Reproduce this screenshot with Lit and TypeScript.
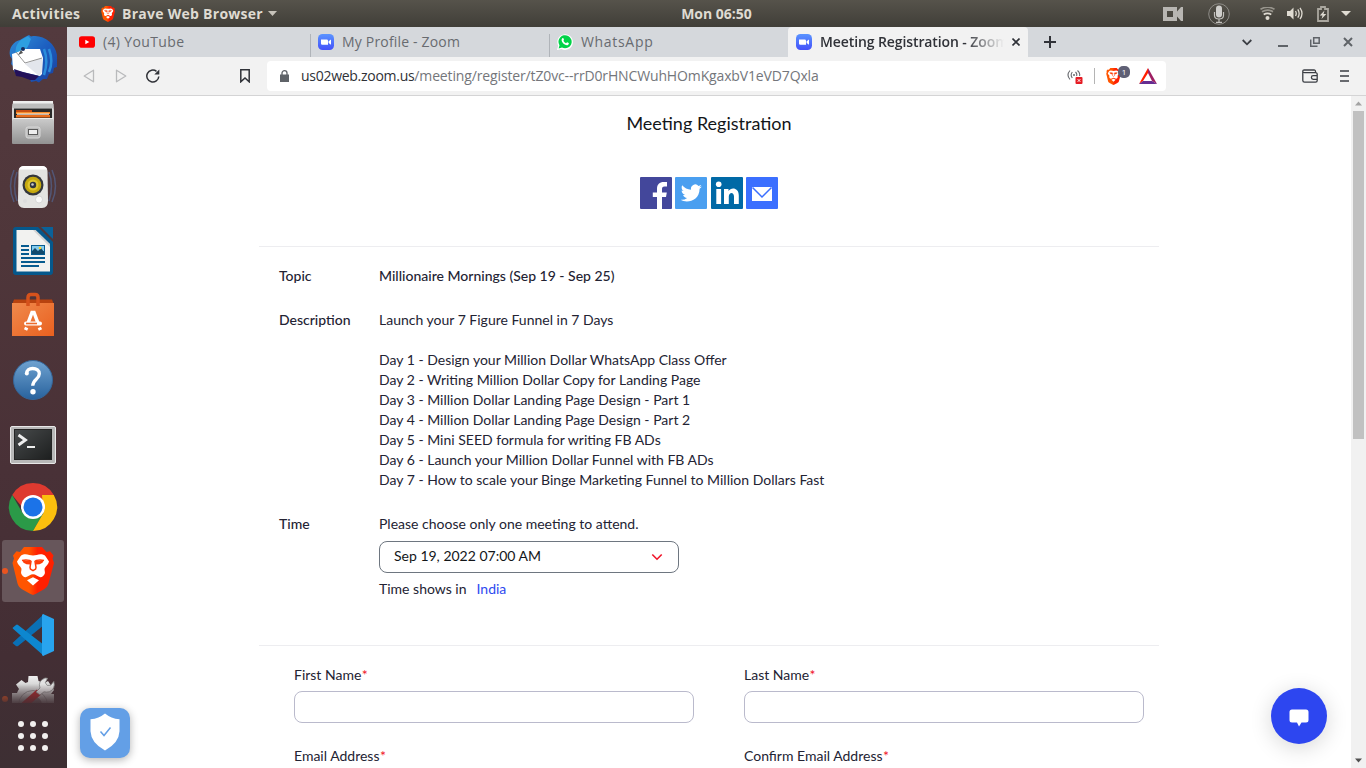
import { LitElement, html, css, svg, nothing, type TemplateResult } from "lit";
import { customElement } from "lit/decorators.js";
import { classMap } from "lit/directives/class-map.js";

const lion = (id: string) => svg`
  <defs><linearGradient id=${id} x1="0" x2="1"><stop offset=".4" stop-color="#ff5500"/><stop offset=".6" stop-color="#ff2000"/></linearGradient></defs>
  <path fill="url(#${id})" d="M15 0h18l4.500 5 3.500-.8 3.500 4.300-1 3 1.500 4.500-5.500 20.500c-.8 2.800-2 4-4.500 5.800L27 46.800 24 48l-3-1.200-8-4.500c-2.500-1.800-3.700-3-4.500-5.800L3.500 16 5 11.500l-1-3L7.500 4.200l3.500.8z"/>
  <path fill="#fff" d="M24 8.500c-2.500 0-5-1.300-7.500-1.300-2 0-4 .6-5 2L8 14.500c.3 2.500 3 4.500 4.300 6.700.6 1.300-.5 3.500-.2 5 .6 2 2.500 4 4.500 4 2.500-.8 5-3 7.400-3s4.900 2.200 7.400 3c2 0 3.900-2 4.500-4 .3-1.500-.8-3.700-.2-5 1.300-2.200 4-4.200 4.300-6.700l-3.500-5.300c-1-1.400-3-2-5-2-2.500 0-5 1.300-7.500 1.300z"/>
  <g fill="none" stroke="#ff3c08" stroke-width="1.500" stroke-linejoin="round"><path d="M13 13.400q4-1 7.500 0l1.500 1-1 6 .5 1.800 2.500 1.500 2.500-1.500.5-1.800-1-6 1.500-1q3.500-1 7.500 0"/></g>
  <path fill="#ff3c08" d="M13.500 13.500l8 .5-.5 3.500-3.500-.2-3-1.500zM34.500 13.500l-8 .5.5 3.500 3.500-.2 3-1.500z"/>
  <path fill="#fff" d="M24 30.200l6 3-6 5.300-6-5.300z"/>`;

const zoomIcon = html`<svg width="16" height="16" viewBox="0 0 16 16"><defs><linearGradient id="z" y2="1" x2="0"><stop stop-color="#5a94ff"/><stop offset="1" stop-color="#4451fa"/></linearGradient></defs><rect width="16" height="16" rx="4.500" fill="url(#z)"/><path fill="#fff" d="M3 5.500h5.700q1.300 0 1.300 1.300v4H4.300Q3 10.800 3 9.500zM10.600 7.200L13 5.400v5.400l-2.400-1.800z"/></svg>`;

const dockIcons: { name: string; art: TemplateResult; active?: boolean; running?: boolean }[] = [
  { name: "Thunderbird", art: svg`
    <defs><linearGradient id="tb" x1="0" y1="0" x2="1" y2="1"><stop stop-color="#2f8fd8"/><stop offset=".5" stop-color="#1d5fc0"/><stop offset="1" stop-color="#1a3f9c"/></linearGradient></defs>
    <path fill="url(#tb)" d="M16 2l4-2 2 1.500C34-1 46 8 48 20v12l-3 1-1 5-4 1-2 5-4 0-4 3.500-3-1.500-5 1-1-3-6-3-7-1-3-4 0-4-3-3 1-5-2-3C-1 13 5 6 11 5z"/>
    <path fill="#2d9fe0" d="M12 5l7-4 3 3c-2 4-2 7-5 10l-6 5-1 2-3-1c-1-6 0-11 5-15z"/>
    <path fill="#fff" d="M3 19l6-2 6-3h16l3 9-1 16-2 2L4 35z"/>
    <path fill="#e3e6ec" d="M16 29L33 23l0 14-3 4z"/><path d="M7 17l9 11 17-5" fill="none" stroke="#888" stroke-width=".9"/>
    <path fill="#23115a" d="M5 34l9 3 16 4-4 4h-5l-8-3-6-1z"/>
    <path d="M35 14c3 8 3 17 0 26M40 14c3 8 3 16 0 23" stroke="#2a8ddc" stroke-width="2.500" fill="none"/>
    <circle cx="14" cy="14" r="2" fill="#182d60"/><path fill="#555" d="M12 15l-3 5 5-2z"/>` },
  { name: "Files", art: svg`
    <defs><linearGradient id="fl" x2="0" y2="1"><stop stop-color="#ccc"/><stop offset="1" stop-color="#929292"/></linearGradient></defs>
    <path fill="#d6d6d6" d="M4 3q0-1 1-1h38q1 0 1 1l1 8v32H3V9z"/><path fill="#eee" d="M4 2h40v2H4z"/><path fill="#bdbdbd" d="M3.500 5h41v4h-41z"/>
    <path fill="#292929" d="M5 9.500h38v11H5z"/><path fill="#c84e12" d="M7 11h16v3H7z"/><path fill="#f58c2c" d="M7 13h34v2H7z"/><path fill="#fff2e4" d="M8 14.500h32v1.200H8z"/><path fill="#ea6d1c" d="M7 16h34v2.500H7z"/>
    <path fill="url(#fl)" d="M5 19h38l2 3v22q0 1-1 1H4q-1 0-1-1V22z"/><path stroke="#ececec" d="M4 19.500h40"/>
    <rect x="17" y="28" width="14" height="11" rx="2" fill="#bcbcbc" stroke="#d9d9d9"/><rect x="19.500" y="30.500" width="9" height="5" fill="#eee" stroke="#5b5b5b"/>` },
  { name: "Rhythmbox", art: svg`
    <path d="M5 7Q-2 23 5 39M43 7q7 16 0 32M8 9Q3 23 8 38M40 9q5 14 0 29" stroke="#536a9c" stroke-width="1.500" fill="none" opacity=".6"/>
    <path fill="#e4e4e2" d="M15 3h18q5 0 5.500 5l.5 30q0 7-6 7H15q-6 0-6-7L9.500 8q.5-5 5.500-5z"/><path fill="#fff" d="M15 3h18q4 0 5 3.500H10Q11 3 15 3z"/>
    <circle cx="24" cy="22" r="10.500" fill="#34373c"/><circle cx="24" cy="22" r="8.300" fill="#c5a80e"/><circle cx="24" cy="22" r="5.500" fill="#e0c52c"/><circle cx="24" cy="22" r="3.200" fill="#303440"/><circle cx="23.500" cy="21.500" r="1.300" fill="#ccc"/>
    <circle cx="30" cy="36.500" r="3.500" fill="#fafafa" stroke="#ccc" stroke-width=".7"/><circle cx="16" cy="38" r="2" fill="#ddd"/>` },
  { name: "LibreOffice Writer", art: svg`
    <path fill="#05588c" d="M7 0h22l15 15v30q0 3-3 3H7q-3 0-3-3V3q0-3 3-3z"/><path fill="#0a6299" d="M32 0h12v12z"/>
    <path fill="#f2f2f0" d="M7.500 3h19L41 17v27.500H7.500z"/><path fill="#bdbdbd" d="M26.500 3L41 17v3L24 3z" opacity=".6"/>
    <path stroke="#075b8f" stroke-width="1.900" d="M12 19h8M12 23h8M12 27h8M12 31h24M12 35h24M12 39h18"/>
    <rect x="22" y="18" width="14" height="10" fill="#075b8f"/><path fill="#85cbed" d="M23 19h12v5H23z"/><path fill="#134a6c" d="M23 27v-3l3-3 3 3 3-3 3 4v2z"/><circle cx="31" cy="21" r="1.300" fill="#ffd42a"/>` },
  { name: "Ubuntu Software", art: svg`
    <defs><linearGradient id="us" x2="1" y2="1"><stop stop-color="#f08a4c"/><stop offset="1" stop-color="#e9601f"/></linearGradient></defs>
    <path fill="#b8430f" d="M5 8.500h38l2 5.500H3z"/>
    <path fill="url(#us)" d="M3 12h42v33H3z"/><path d="M19 15V6.500q0-3 3-3h4q3 0 3 3V15" stroke="#d5521c" stroke-width="3.500" fill="none"/>
    <path d="M18.500 33.500L23 21.500h2l4.500 12M16.500 39l1.200-2.500M31.500 39l-1.200-2.500" stroke="#fff" stroke-width="3.500" fill="none"/><rect x="15" y="30.500" width="18" height="4" rx="2" fill="#fff"/><rect x="17" y="31.700" width="11" height="1.600" fill="#ec6b2c"/>` },
  { name: "Help", art: svg`
    <defs><linearGradient id="hp" x2="0" y2="1"><stop stop-color="#6fa2d0"/><stop offset="1" stop-color="#28629d"/></linearGradient></defs>
    <circle cx="24" cy="25" r="19.500" fill="url(#hp)" stroke="#35679a"/><path d="M17.800 18.500c-.3-3.200 2.300-5 5.800-5 4 0 6.700 2 6.700 5.300 0 5.700-6.300 5.300-6.600 12" stroke="#fff" stroke-width="3.300" fill="none"/><circle cx="17.800" cy="18.500" r="2" fill="#fff"/><circle cx="24" cy="36.700" r="2.700" fill="#fff"/>` },
  { name: "Terminal", art: svg`
    <defs><linearGradient id="tm" x2="1" y2="1"><stop stop-color="#474a4b"/><stop offset="1" stop-color="#1d1f1f"/></linearGradient></defs>
    <rect x="1.500" y="7.500" width="45" height="37" rx="1.500" fill="#b8b8b8" stroke="#e8e8e8"/><rect x="5.500" y="10.500" width="37" height="30" fill="url(#tm)" stroke="#252525"/>
    <path d="M9.500 16l7 5-7 5" stroke="#eee" stroke-width="2.800" fill="none"/><path stroke="#eee" stroke-width="2" d="M18 28h8"/>` },
  { name: "Chrome", art: svg`
    <path fill="#de3a30" d="M3.200 12A24 24 0 0 1 44.800 12L36 24H13z"/><path fill="#2b9a48" d="M3.200 12A24 24 0 0 0 24 48L35 29 24 24 13.600 30z"/><path fill="#fbbf0e" d="M44.800 12A24 24 0 0 1 24 48L34.400 30 33 12z"/>
    <circle cx="24" cy="24" r="12" fill="#fff"/><circle cx="24" cy="24" r="9.500" fill="#1b73e8"/>` },
  { name: "Brave", active: true, running: true, art: lion("lion-dock") },
  { name: "Visual Studio Code", art: svg`
    <path fill="#0a70b5" d="M4 31.500L35 3v11L9 35q-1 .7-2 0l-3-2.500q-.8-.5 0-1z"/>
    <path fill="#0d87cf" d="M4 16.500L7 14q1-.8 2 0l26 20v11L4 17.700q-.8-.6 0-1.200z"/>
    <path fill="#28a4ee" d="M34 3l11 5v32l-11 5-1-1V4z"/>` },
  { name: "System Tools", running: true, art: svg`
    <defs><linearGradient id="gr" x2="0" y2="1"><stop stop-color="#f0f0f0"/><stop offset="1" stop-color="#8e8e8e"/></linearGradient></defs>
    <path fill="url(#gr)" d="M19.500 1h9l1 5q3 .7 5.500 2.500L39 6l6 9-3 4h3v15H3V18h5q.7-2 2-4L7 9.500 12.500 5l4 3 2.500-1z"/>
    <path d="M9.500 30a14.500 14.500 0 0 1 29 0" fill="none" stroke="#8a8a8a" stroke-width="1"/><path d="M15 30a9 9 0 0 1 18 0z" fill="#5f5356" opacity=".75"/>
    <path d="M14 31L30 17" stroke="#b3262a" stroke-width="6.500"/><path fill="#e2e2e2" stroke="#858585" stroke-width=".8" d="M27 17l4-4q-2.500-7 5-10l2.500.3-2.200 4.500 2 2.700 3.500-.2 3-3.800q2 7.500-4.500 10.300-3 .8-5.300 0L31 20z"/>` },
];

@customElement("desktop-dock")
class DesktopDock extends LitElement {
  static styles = css`
    :host { width: 67px; flex: none; display: flex; flex-direction: column; background: linear-gradient(#533a3e, #4f363a 30%, #493137 60%, #432e34 85%, #3d2f33); }
    .list { height: 676px; overflow: hidden; -webkit-mask-image: linear-gradient(#000 657px, transparent 679px); mask-image: linear-gradient(#000 657px, transparent 679px); }
    .tile { position: relative; box-sizing: border-box; width: 62px; height: 62px; margin: 1px 0 2px 2px; display: grid; place-items: center; border-radius: 3px; }
    .active { background: #67565b; }
    .running::before { content: ""; position: absolute; left: 0; top: 28px; width: 6px; height: 6px; border-radius: 50%; background: #e95420; }
    .apps { display: grid; grid-template-columns: repeat(3, 6px); gap: 6px; padding: 18px 0 0 18px; }
    .dot { width: 6px; height: 6px; border-radius: 50%; background: #f2f0ef; }
    svg { display: block; overflow: visible; }
  `;
  render() {
    return html`<div class="list">${dockIcons.map((i) => html`
      <div class=${classMap({ tile: true, active: !!i.active, running: !!i.running })}>
        <svg width="48" height="48" viewBox="0 0 48 48" aria-label=${i.name}>${i.art}</svg></div>`)}</div>
      <div class="apps">${Array.from({ length: 9 }, () => html`<span class="dot"></span>`)}</div>`;
  }
}

@customElement("system-bar")
class SystemBar extends LitElement {
  static styles = css`
    :host { height: 27px; flex: none; display: grid; grid-template-columns: 1fr auto 1fr; align-items: center; background: linear-gradient(#56534b, #403e38); color: #dfdbd2; font: 700 14px/26px "Open Sans", "Noto Sans", sans-serif; }
    .left { display: flex; align-items: center; padding-left: 12px; }
    .act { width: 89px; letter-spacing: 0.34px; }
    .app { margin-left: 7px; margin-right: 5px; letter-spacing: 0.27px; }
    .clock { padding-left: 67px; letter-spacing: 0; line-height: 25px; }
    .right { display: flex; justify-content: flex-end; align-items: center; padding-right: 15px; }
    svg { display: block; }
    .mic { margin: 0 30px 0 25px; }
    .wifi { margin-right: 12px; }
    .gap { margin-right: 14px; }
    .bat { margin-right: 12px; }
  `;
  render() {
    return html`
      <div class="left"><span class="act">Activities</span>
        <svg width="14" height="16" viewBox="3 0 42 48">${lion("lion-bar")}</svg><span class="app">Brave Web Browser</span>
        <svg width="9" height="5"><path fill="#c7c3ba" d="M0 0h9L4.500 5z"/></svg></div>
      <div class="clock">Mon 06:50</div>
      <div class="right">
        <svg width="20" height="14" viewBox="0 0 20 14"><path fill="#b8b6b2" fill-rule="evenodd" d="M0 0h14v4.500L18 0h2v14h-2l-4-4.500V14H0zM4 4v6h6V4z"/></svg>
        <svg class="mic" width="22" height="22" viewBox="0 0 22 22"><circle cx="11" cy="11" r="10.300" fill="none" stroke="#8d8b86"/><rect x="8" y="2.500" width="6" height="12" rx="3" fill="#d0cfcc"/><path d="M6.500 9v3.500q0 3.500 4.500 3.500t4.500-3.500V9M11 16v3M8 19.300h6" fill="none" stroke="#c2c0bc" stroke-width="1.200"/></svg>
        <svg class="wifi" width="15" height="13" viewBox="0 0 15 13"><circle cx="7.500" cy="11" r="2" fill="#dfdbd2"/><path d="M3.700 7.600q3.800-2.500 7.600 0" stroke="#dfdbd2" stroke-width="1.800" fill="none"/><path d="M2 4.800q5.500-3.400 11 0M.5 2.200q7-4 14 0" stroke="#98958d" stroke-width="1.600" fill="none"/></svg>
        <svg class="gap" width="16" height="13" viewBox="0 0 16 13"><path fill="#dfdbd2" d="M0 4h3l3.500-3.500v12L3 9H0z"/><path d="M8.500 4q1.500 2.500 0 5M10.800 2.300q2.700 4.200 0 8.400M13 .8q4 5.700 0 11.400" stroke="#dfdbd2" stroke-width="1.300" fill="none"/></svg>
        <svg class="bat" width="12" height="16" viewBox="0 0 12 16"><path d="M1 3h3V1h4v2h3v12H1z" fill="none" stroke="#aaa79f" stroke-width="1.800"/><path fill="#dfdbd2" d="M7.500 4.500L2.800 9.500h2.700L4.500 13l4.800-5H6.500z"/></svg>
        <svg width="10" height="5"><path fill="#dfdbd2" d="M0 0h10L5 5z"/></svg>
      </div>`;
  }
}

const youtube = html`<svg width="16" height="16" viewBox="0 0 16 16"><rect y="2.300" width="16" height="11.400" rx="2.800" fill="#f00"/><path fill="#fff" d="M6.300 5.700v4.600L10.300 8z"/></svg>`;
const whatsapp = html`<svg width="16" height="16" viewBox="0 0 16 16"><path fill="#fff" d="M0 16l1.200-4.300A7.800 7.800 0 1 1 4.500 15z"/><path fill="#00d348" d="M1.600 14.500l.9-3.200A6.600 6.600 0 1 1 5 13.600z"/><path fill="#fff" d="M5.300 4.200c.5-.3 1-.2 1.200.3l.5 1.200c0 .5-.6.8-.6 1.100.6 1.200 1.500 1.900 2.600 2.400.4 0 .8-1 1.200-.9l1.500.8c.4.4 0 1.500-.8 1.900-1.400.6-3.600-.4-5-2C4.600 7.500 4 5.400 5.300 4.200z"/></svg>`;

@customElement("browser-chrome")
class BrowserChrome extends LitElement {
  static styles = css`
    :host { display: block; flex: none; font: 14px/20px "Open Sans", "Noto Sans", sans-serif; }
    .tabs { height: 30px; display: flex; background: #d5d8dc; color: #686b70; }
    .tab { box-sizing: border-box; display: flex; align-items: center; gap: 8px; height: 30px; padding-left: 12px; white-space: nowrap; overflow: hidden; }
    .t1 { width: 239px; } .t2 { width: 239px; } .t3 { width: 243px; }
    .tab:not(.t1):not(.on) { background: linear-gradient(#b0b4b9, #b0b4b9) 4px 7px / 1px 23px no-repeat; }
    .s1 { letter-spacing: 0.36px; } .s2 { letter-spacing: 0.18px; } .s3 { letter-spacing: 0.68px; }
    .on { width: 240px; padding-left: 8px; background: #f2f2f2; border-radius: 4px 4px 0 0; color: #303238; font-weight: 600; }
    .on .name { width: 184px; overflow: hidden; letter-spacing: -0.1px; -webkit-mask-image: linear-gradient(90deg, #000 145px, transparent 184px); mask-image: linear-gradient(90deg, #000 145px, transparent 184px); }
    .ctl { flex: 1; display: flex; align-items: center; padding-right: 13px; color: #3b3e44; }
    .plus { margin-left: 16px; margin-right: auto; }
    .dn { margin-right: 26px; } .min { margin-right: 22px; margin-top: 8px; } .max { margin-right: 23px; }
    svg { display: block; flex: none; }
    .tool { box-sizing: border-box; height: 39px; display: flex; align-items: center; background: #f2f2f2; border-bottom: 1px solid #d4d4d5; padding: 0 17px 0 16px; }
    .fwd { margin: 0 19px 0 20px; } .re { margin-right: 80px; } .book { margin-right: 17px; }
    .url { box-sizing: border-box; width: 899px; height: 30px; border-radius: 4px; background: #fff; display: flex; align-items: center; padding: 0 9px 0 13px; color: #74767b; }
    .addr { margin-left: 12px; margin-right: auto; white-space: nowrap; letter-spacing: -0.14px; }
    .host { color: #2f3136; letter-spacing: -0.28px; }
    .sep { width: 1px; height: 16px; background: #b4b4b4; margin: 0 11px 0 11px; }
    .shield { position: relative; margin-right: 18px; }
    .badge { position: absolute; left: 12px; top: -2px; width: 12px; height: 12px; border-radius: 5px; background: #5f6075; color: #fff; font: 8px/12px "Open Sans", sans-serif; text-align: center; }
    .wallet { margin-left: auto; margin-right: 22px; }
  `;
  render() {
    return html`
      <div class="tabs">
        <div class="tab t1">${youtube}<span class="s1">(4) YouTube</span></div>
        <div class="tab t2">${zoomIcon}<span class="s2">My Profile - Zoom</span></div>
        <div class="tab t3">${whatsapp}<span class="s3">WhatsApp</span></div>
        <div class="tab on">${zoomIcon}<span class="name">Meeting Registration - Zoom</span>
          <svg width="8" height="8"><path d="M.5.5l7 7M7.500.5l-7 7" stroke="#303238" stroke-width="1.600"/></svg></div>
        <div class="ctl">
          <svg class="plus" width="12" height="12"><path d="M6 0v12M0 6h12" stroke="#303238" stroke-width="2"/></svg>
          <svg class="dn" width="10" height="7"><path d="M.7 1L5 5.300 9.300 1" fill="none" stroke="currentColor" stroke-width="1.800"/></svg>
          <svg class="min" width="10" height="2"><path fill="#5f6368" d="M0 0h10v2H0z"/></svg>
          <svg class="max" width="10" height="10" viewBox="0 0 10 10"><path d="M3.700.8h5.500v5.500H3.700zM.7 2.500v6.800h6.800" fill="none" stroke="#5f6368" stroke-width="1.500"/></svg>
          <svg width="10" height="10"><path d="M1 1l8 8M9 1L1 9" stroke="#5f6368" stroke-width="2"/></svg>
        </div>
      </div>
      <div class="tool">
        <svg width="12" height="14" viewBox="0 0 12 14"><path d="M10.500 1.200v11.600L1.200 7z" fill="none" stroke="#b9babc" stroke-width="1.300" stroke-linejoin="round"/></svg>
        <svg class="fwd" width="12" height="14" viewBox="0 0 12 14"><path d="M1.500 1.200v11.600L10.800 7z" fill="none" stroke="#b9babc" stroke-width="1.300" stroke-linejoin="round"/></svg>
        <svg class="re" width="14" height="14" viewBox="0 0 14 14"><path d="M12.800 7.500A6 6 0 1 1 10.500 2.300" fill="none" stroke="#303238" stroke-width="1.500"/><path fill="#303238" d="M13.300.5v5H8.300z"/></svg>
        <svg class="book" width="10" height="14" viewBox="0 0 10 14"><path d="M.8.8h8.400v12L5 9 .8 12.800z" fill="none" stroke="#303238" stroke-width="1.500"/></svg>
        <div class="url">
          <svg width="9" height="12" viewBox="0 0 9 12"><path fill="#5f6368" d="M0 4.500h9V12H0z"/><path d="M2 5V3a2.500 2.300 0 0 1 5 0v2" fill="none" stroke="#5f6368" stroke-width="1.300"/></svg>
          <span class="addr"><span class="host">us02web.zoom.us</span>/meeting/register/tZ0vc--rrD0rHNCWuhHOmKgaxbV1eVD7Qxla</span>
          <svg width="16" height="15" viewBox="0 0 16 15"><path d="M3 1.500Q-1 6 3 10.500M5.300 3q-2.300 3 0 6M10.500 1.500Q13.500 4 12.500 7M8.500 3q2 2 1 4" fill="none" stroke="#66686d" stroke-width="1.100"/><circle cx="7" cy="6" r="1" fill="#66686d"/><rect x="8.500" y="8" width="7" height="7" rx="1" fill="#e51c24"/><path d="M10.700 10.200l2.600 2.600M13.300 10.200l-2.600 2.600" stroke="#fff"/></svg>
          <span class="sep"></span>
          <span class="shield"><svg width="15" height="17" viewBox="3 0 42 48">${lion("lion-url")}</svg><span class="badge">1</span></span>
          <svg width="18" height="16" viewBox="0 0 18 16"><path fill="#ff1f00" d="M9 0v5L4 13l-4 3z"/><path fill="#9e1f63" d="M9 0l9 16-5-3-4-8z"/><path fill="#662d91" d="M0 16l4-3h9l5 3z"/></svg>
        </div>
        <svg class="wallet" width="16" height="14" viewBox="0 0 16 14"><path d="M13.500 3.700V2.500q0-1.500-1.500-1.500H2.300Q.8 1 .8 2.400v9q0 1.800 1.800 1.800h11q1.600 0 1.600-1.600V5.300q0-1.600-1.600-1.600H2.500Q1 3.700.8 2.500M15 6.700h-3.800a1.800 1.800 0 0 0 0 3.600H15" fill="none" stroke="#3b3e44" stroke-width="1.300"/></svg>
        <svg width="9" height="12"><path d="M0 1h9M0 6h9M0 11h9" stroke="#3b3e44" stroke-width="1.600"/></svg>
      </div>`;
  }
}

const description = [
  "Launch your 7 Figure Funnel in 7 Days",
  "",
  "Day 1 - Design your Million Dollar WhatsApp Class Offer",
  "Day 2 - Writing Million Dollar Copy for Landing Page",
  "Day 3 - Million Dollar Landing Page Design - Part 1",
  "Day 4 - Million Dollar Landing Page Design - Part 2",
  "Day 5 - Mini SEED formula for writing FB ADs",
  "Day 6 - Launch your Million Dollar Funnel with FB ADs",
  "Day 7 - How to scale your Binge Marketing Funnel to Million Dollars Fast",
];

const fields: { label: string; cut?: boolean }[] = [
  { label: "First Name" }, { label: "Last Name" },
  { label: "Email Address", cut: true }, { label: "Confirm Email Address", cut: true },
];

@customElement("registration-page")
class RegistrationPage extends LitElement {
  static styles = css`
    :host { position: relative; flex: 1; min-height: 0; display: flex; overflow: hidden; background: #fff; color: #232333; font: 14px/20px Lato, sans-serif; }
    .scroll { flex: 1; overflow: hidden; }
    .page { width: 900px; margin: 0 auto; }
    h1 { margin: 0; padding-top: 15px; height: 24px; font: 400 18px/24px Lato, sans-serif; text-align: center; color: #131619; }
    .social { display: grid; grid-template-columns: 35px 36px 35px 32px; justify-content: center; padding: 42px 0 37px; }
    .social svg { display: block; }
    .info { border-top: 1px solid #ededf0; padding: 19px 20px 0; height: 379px; }
    .row { display: grid; grid-template-columns: 100px 1fr; margin-bottom: 24px; }
    .key, .strong { font-weight: 500; }
    .line { min-height: 20px; white-space: pre; }
    .select { box-sizing: border-box; width: 300px; height: 32px; margin: 7px 0 6px; border: 1px solid #6e7680; border-radius: 8px; padding: 0 15px 2px 14px; display: flex; align-items: center; justify-content: space-between; color: #131619; }
    .select svg { margin-top: 2px; }
    .link { color: #2d49f0; margin-left: 10px; }
    .form { border-top: 1px solid #ededf0; padding: 19px 15px 0 35px; display: grid; grid-template-columns: 400px 400px; column-gap: 50px; row-gap: 23px; }
    .star { color: #f01428; margin-left: 0.4px; }
    .input { box-sizing: border-box; height: 32px; margin-top: 6px; border: 1px solid #babacc; border-radius: 8px; }
    .bar { width: 15px; background: #f1f1f1; display: flex; flex-direction: column; align-items: center; }
    .bar svg { display: block; flex: none; }
    .thumb { width: 11px; height: 328px; background: #c1c1c1; margin-bottom: auto; }
    .shieldbox { position: absolute; left: 13px; bottom: 10px; width: 50px; height: 50px; border-radius: 10px; background: #639fe6; box-shadow: 0 2px 8px rgba(0,0,0,.3); display: grid; place-items: center; }
    .shieldbox svg { margin-top: -3px; }
    .chat { position: absolute; right: 39px; bottom: 24px; width: 56px; height: 56px; border-radius: 50%; background: #2d46f0; box-shadow: 0 4px 22px rgba(0,0,0,.16); display: grid; place-items: center; }
    .chat svg { margin-top: 3px; }
  `;
  render() {
    return html`
      <div class="scroll"><div class="page">
        <h1>Meeting Registration</h1>
        <div class="social">
          <svg width="32" height="32" viewBox="0 0 32 32"><rect width="32" height="32" rx="1" fill="#43479b"/><path fill="#fff" d="M17 32V20h-4.200v-4.600H17v-3.600C17 7.200 19.600 5 23.700 5H27v4.400h-2.500c-2 0-2.500 1-2.500 2.600v3.400h4.800L26 20h-4v12z"/></svg>
          <svg width="32" height="32" viewBox="0 0 32 32"><rect width="32" height="32" rx="1" fill="#4a9ff0"/><path fill="#fff" d="M26.800 9.500c-.8.400-1.600.6-2.500.7.900-.5 1.600-1.400 1.900-2.300-.8.500-1.800.8-2.700 1a4.300 4.300 0 0 0-7.400 3.900c-3.600-.2-6.700-1.900-8.900-4.500-1.100 2-.6 4.500 1.400 5.800-.7 0-1.400-.2-2-.5 0 2 1.500 3.900 3.500 4.300-.6.200-1.300.2-2 .1.600 1.700 2.100 2.900 4 3a8.700 8.700 0 0 1-6.400 1.800c6 3.900 18.900 1.200 18.900-11.100.9-.6 1.600-1.400 2.200-2.200z"/></svg>
          <svg width="32" height="32" viewBox="0 0 32 32"><rect width="32" height="32" rx="1" fill="#0069a6"/><circle cx="7.700" cy="7.300" r="2.800" fill="#fff"/><path fill="#fff" d="M5.300 12h4.800v15H5.300zM13 12h4.500v2.100c2.500-4 10.300-3.600 10.300 4.400V27H23v-7.500c0-5.100-5.200-4.500-5.200 0V27H13z"/></svg>
          <svg width="32" height="32" viewBox="0 0 32 32"><rect width="32" height="32" rx="1" fill="#3b6fff"/><path fill="#fff" d="M6 10h20v14H6z"/><path d="M6.500 10.500L16 20l9.500-9.500" fill="none" stroke="#3b6fff" stroke-width="1.500"/></svg>
        </div>
        <div class="info">
          <div class="row"><div class="key">Topic</div><div class="strong">Millionaire Mornings (Sep 19 - Sep 25)</div></div>
          <div class="row"><div class="key">Description</div><div>${description.map((d) => html`<div class="line">${d}</div>`)}</div></div>
          <div class="row"><div class="key">Time</div><div>
            <div>Please choose only one meeting to attend.</div>
            <div class="select"><span>Sep 19, 2022 07:00 AM</span><svg width="12" height="8" viewBox="0 0 12 8"><path d="M1.300 1.500L6 6.200l4.700-4.700" fill="none" stroke="#f01428" stroke-width="1.600"/></svg></div>
            <div>Time shows in<span class="link">India</span></div></div></div>
        </div>
        <div class="form">${fields.map((f) => html`<div><div>${f.label}<span class="star">*</span></div>${f.cut ? nothing : html`<div class="input"></div>`}</div>`)}</div>
      </div></div>
      <div class="bar">
        <svg width="15" height="15"><path fill="#a3a3a3" d="M4 9.500h7L7.500 5.500z"/></svg><div class="thumb"></div>
        <svg width="15" height="15"><path fill="#505050" d="M4 5.500h7L7.500 9.500z"/></svg>
      </div>
      <div class="shieldbox"><svg width="30" height="38" viewBox="0 0 30 38"><path fill="#fff" d="M15 .5q6 5 14.500 5.800v12Q29 30 15 37.500 1 30 .5 18.300v-12Q9 5.500 15 .5z"/><path d="M10.500 18.500l3.500 4 6.500-8" fill="none" stroke="#639fe6" stroke-width="1.500"/></svg></div>
      <div class="chat"><svg width="20" height="18" viewBox="0 0 20 18"><path fill="#fff" d="M3 .5h14q2.500 0 2.500 2.500v8q0 2.500-2.500 2.500h-4.500L10 17.500 8 13.500H3Q.5 13.500.5 11V3Q.5.500 3 .500z"/></svg></div>`;
  }
}

@customElement("app-root")
class AppRoot extends LitElement {
  static styles = css`
    :host { display: flex; flex-direction: column; width: 1366px; height: 768px; overflow: hidden; }
    .body { flex: 1; min-height: 0; display: flex; }
    .window { flex: 1; min-width: 0; display: flex; flex-direction: column; }
  `;
  render() {
    return html`<system-bar></system-bar>
      <div class="body"><desktop-dock></desktop-dock>
        <div class="window"><browser-chrome></browser-chrome><registration-page></registration-page></div></div>`;
  }
}
